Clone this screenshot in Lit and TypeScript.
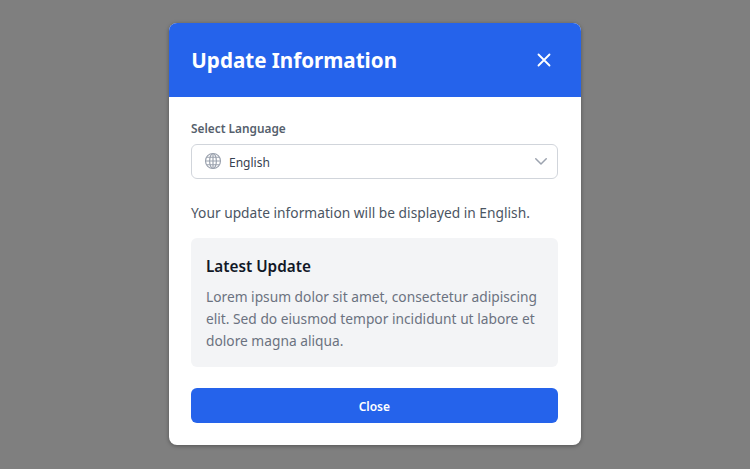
import { LitElement, html, css } from "lit";
import { customElement } from "lit/decorators.js";

@customElement("app-root")
export class AppRoot extends LitElement {
  static styles = css`
    :host {
      display: flex;
      align-items: flex-start;
      justify-content: center;
      width: 750px;
      height: 469px;
      background: #7f7f7f;
      font-family: "Noto Sans", sans-serif;
      overflow: hidden;
    }
    .modal {
      width: 411.4px;
      margin-top: 23.3px;
      background: #fff;
      border-radius: 8px;
      overflow: hidden;
      box-shadow: 0 1px 4px rgba(0, 0, 0, 0.35);
      display: flex;
      flex-direction: column;
    }
    .header {
      height: 73.4px;
      box-sizing: border-box;
      padding: 0 26px 0 22px;
      background: #2563eb;
      display: flex;
      align-items: center;
      justify-content: space-between;
      color: #fff;
    }
    .title {
      font-size: 20.6px;
      font-weight: 700;
      line-height: 30px;
    }
    .x {
      display: block;
      width: 22px;
      height: 22px;
    }
    .body {
      padding: 22.5px 23px 22px 21.7px;
      display: flex;
      flex-direction: column;
    }
    .label {
      font-size: 11.85px;
      font-weight: 600;
      line-height: 18px;
      color: #565f6d;
      margin-bottom: 6.5px;
    }
    .select {
      height: 35px;
      box-sizing: border-box;
      border: 1px solid #d1d5db;
      border-radius: 6px;
      display: flex;
      align-items: center;
      padding: 0 7px 0 12px;
      color: #374151;
      font-size: 12px;
      gap: 7px;
    }
    .select span { flex: 1; padding-top: 2px; }
    .globe { width: 18px; height: 18px; display: block; }
    .chev { width: 18px; height: 18px; display: block; }
    .hint {
      margin: 23px 0 14px;
      font-size: 13.75px;
      line-height: 22px;
      color: #4b5563;
    }
    .card {
      background: #f3f4f6;
      border-radius: 6px;
      padding: 15px;
    }
    .card h3 {
      margin: 0 0 7px;
      font-size: 15.3px;
      font-weight: 600;
      line-height: 26px;
      color: #111827;
    }
    .card p {
      margin: 0;
      font-size: 13.75px;
      line-height: 22px;
      color: #6b7280;
    }
    .close {
      margin-top: 21.5px;
      height: 35px;
      border: none;
      border-radius: 6px;
      background: #2563eb;
      color: #fff;
      font-family: inherit;
      font-size: 12px;
      font-weight: 600;
      padding: 2px 0 0;
    }
  `;

  render() {
    return html`
      <div class="modal">
        <div class="header">
          <div class="title">Update Information</div>
          <svg class="x" viewBox="0 0 24 24" fill="none" stroke="#fff" stroke-width="2" stroke-linecap="round">
            <path d="M6 6l12 12M18 6L6 18"></path>
          </svg>
        </div>
        <div class="body">
          <div class="label">Select Language</div>
          <div class="select">
            <svg class="globe" viewBox="0 0 24 24" fill="none" stroke="#9ca3af" stroke-width="1.6">
              <circle cx="12" cy="12" r="10"></circle>
              <ellipse cx="12" cy="12" rx="4.5" ry="10"></ellipse>
              <path d="M2 12h20M3.3 7h17.4M3.3 17h17.4M12 2v20"></path>
            </svg>
            <span>English</span>
            <svg class="chev" viewBox="0 0 24 24" fill="none" stroke="#9ca3af" stroke-width="2" stroke-linecap="round" stroke-linejoin="round">
              <path d="M5 9l7 7 7-7"></path>
            </svg>
          </div>
          <p class="hint">Your update information will be displayed in English.</p>
          <div class="card">
            <h3>Latest Update</h3>
            <p>Lorem ipsum dolor sit amet, consectetur adipiscing elit. Sed do eiusmod tempor incididunt ut labore et dolore magna aliqua.</p>
          </div>
          <button class="close">Close</button>
        </div>
      </div>
    `;
  }
}
